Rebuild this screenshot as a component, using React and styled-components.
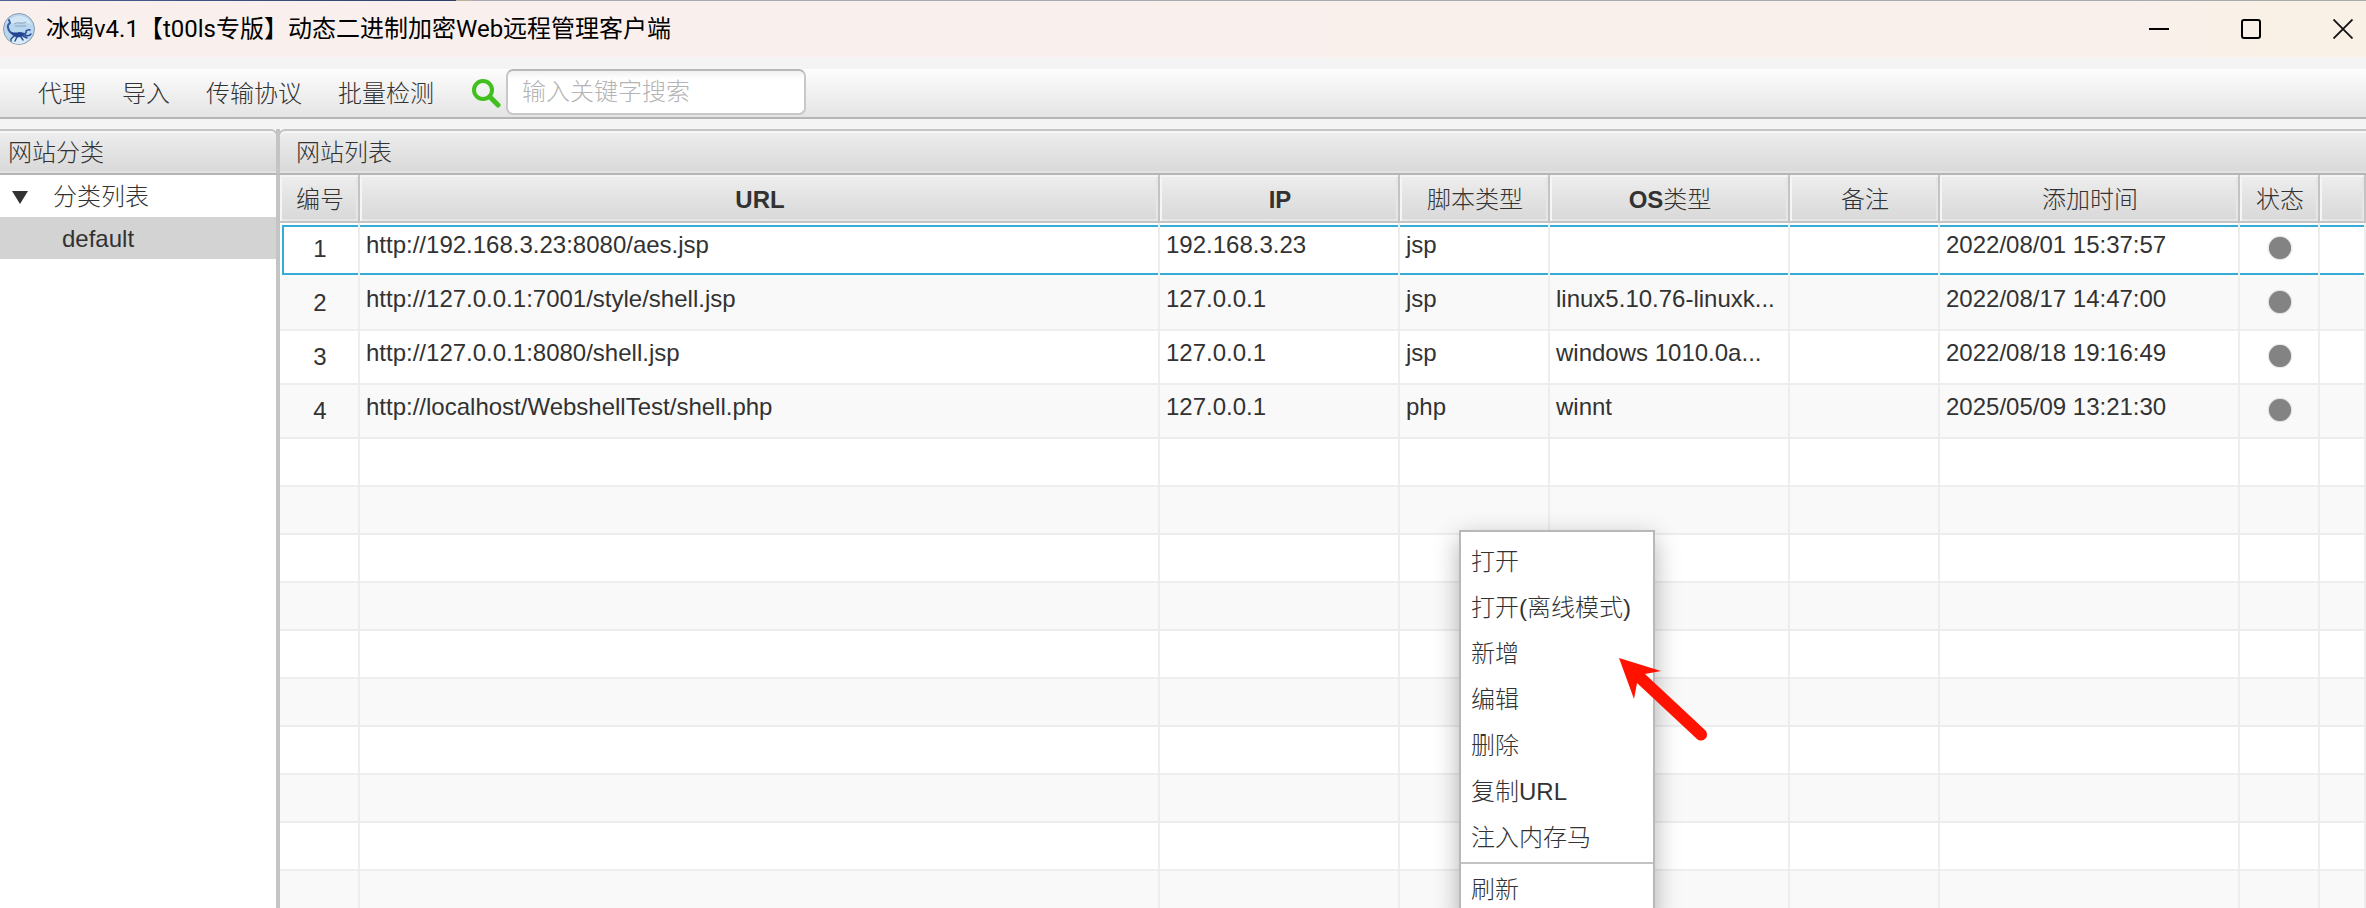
import React from "react";
import styled, { createGlobalStyle, css } from "styled-components";

const GlobalStyle = createGlobalStyle`
  *, *::before, *::after { box-sizing: border-box; }
  body {
    margin: 0;
    background: #f4f4f4;
    color: #323232;
    font: 24px/28px "Liberation Sans", "Noto Sans CJK SC", sans-serif;
    font-weight: 300;
  }
  button, input { font: inherit; color: inherit; }
`;

const LINE = "#c4c4c4";
const CELL_LINE = "#ededed";
const FOCUS = "#35abd6";

const Window = styled.div`
  display: flex;
  flex-direction: column;
  height: 100vh;
  overflow: hidden;
`;

const TopEdge = styled.div`
  flex: none;
  height: 1px;
  background: linear-gradient(90deg, #4c6394 0, #2e3f6b 456px, #b9b39c 456px, #b9b39c 472px, #aaa9ae 472px);
`;

const TitleBar = styled.header`
  flex: none;
  display: flex;
  align-items: center;
  height: 56px;
  padding-left: 3px;
  background: linear-gradient(90deg, #f9f0ee 0, #f9f0ec 90%, #f9f1e6 96%);
`;

const Title = styled.h1`
  flex: 1;
  margin: 0 0 0 11px;
  font: 400 24px/32px Roboto, "Noto Sans CJK SC", sans-serif;
  color: #000;
  white-space: nowrap;
`;

const WindowButtons = styled.div`
  display: flex;
  gap: 46px;
`;

const WindowButton = styled.button`
  display: grid;
  place-items: center;
  width: 46px;
  height: 46px;
  padding: 0;
  border: 0;
  background: none;
`;

const Toolbar = styled.div`
  flex: none;
  display: flex;
  align-items: center;
  height: 50px;
  margin: 12px 0 10px;
  padding-left: 20px;
  border-bottom: 2px solid #b5b5b5;
  background: linear-gradient(#fdfdfd, #e4e4e4);
`;

const MenuButton = styled.button`
  padding: 2px 18px 0;
  border: 0;
  background: none;
  white-space: nowrap;
`;

const SearchLabel = styled.label`
  display: flex;
  align-items: center;
  gap: 5px;
  margin-left: 20px;
`;

const SearchInput = styled.input`
  width: 300px;
  height: 46px;
  margin-bottom: 2px;
  padding: 0 14px;
  border: 2px solid #c8c8c8;
  border-top-color: #b8b8b8;
  border-radius: 7px;
  background: linear-gradient(#f0f0f0, #fff 8px);
  outline: 0;
  &::placeholder { color: #b4b4b4; opacity: 1; }
`;

const Main = styled.main`
  flex: 1;
  min-height: 0;
  display: flex;
`;

const Pane = styled.section`
  display: flex;
  flex-direction: column;
  background: #fff;
`;

const SidePane = styled(Pane)`
  flex: none;
  width: 278px;
  border-right: 2px solid ${LINE};
`;

const ListPane = styled(Pane)`
  position: relative;
  flex: 1;
  min-width: 0;
  border-left: 2px solid ${LINE};
`;

const headerFace = css`
  background: linear-gradient(#eeeeee, #d8d8d8);
`;

const PaneTitle = styled.h2`
  flex: none;
  height: 46px;
  margin: 0;
  margin-${(p) => p.$joined}: -2px;
  padding: 0 0 0 ${(p) => p.$indent}px;
  border: 2px solid ${LINE};
  border-bottom-color: #b5b5b5;
  border-${(p) => (p.$joined === "left" ? "right" : "left")}: 0;
  border-top-${(p) => p.$joined}-radius: 7px;
  ${headerFace}
  box-shadow: inset 0 2px #f6f6f6, inset 0 -2px #e2e2e2;
  font-size: 24px;
  font-weight: 300;
  line-height: 44px;
`;

const Tree = styled.ul`
  margin: 0;
  padding: 0;
  list-style: none;
`;

const TreeItem = styled.li`
  display: flex;
  align-items: center;
  height: 42px;
  padding: 2px 0 0 ${(p) => (p.$leaf ? 62 : 12)}px;
  gap: 25px;
  background: ${(p) => (p.$selected ? "#d3d3d3" : "#fff")};
`;

const Table = styled.table`
  width: 100%;
  table-layout: fixed;
  border-collapse: separate;
  border-spacing: 0;
`;

const Column = styled.col`
  width: ${(p) => (p.$width ? `${p.$width}px` : "auto")};
`;

const HeadCell = styled.th`
  height: 48px;
  padding: 4px 0 0 2px;
  border-right: 2px solid ${LINE};
  border-bottom: 2px solid ${LINE};
  ${headerFace}
  box-shadow: inset 2px 2px #f5f5f5, inset -2px -2px #e6e6e6;
  font-weight: 300;
  white-space: nowrap;
`;

const HeadLatin = styled.span`
  font-weight: 700;
`;

const Cell = styled.td`
  height: ${(p) => (p.$empty ? 48 : 54)}px;
  padding: ${(p) => (p.$center ? "0 0 0 2px" : "8px 6px 0")};
  border-right: 2px solid ${CELL_LINE};
  border-bottom: 2px solid ${CELL_LINE};
  text-align: ${(p) => (p.$center ? "center" : "left")};
  vertical-align: ${(p) => (p.$center ? "middle" : "top")};
  white-space: nowrap;
  overflow: hidden;
`;

const Row = styled.tr`
  background: #fff;
  &:nth-child(even) { background: #f9f9f9; }
  ${(p) =>
    p.$selected &&
    css`
      ${Cell} {
        border-bottom-color: #fafafa;
        box-shadow: inset 0 2px #fff, inset 0 4px ${FOCUS}, inset 0 -2px ${FOCUS};
      }
      ${Cell}:first-child {
        box-shadow: inset 0 2px #fff, inset 2px 0 #fff, inset 4px 0 ${FOCUS}, inset 0 4px ${FOCUS},
          inset 0 -2px ${FOCUS};
      }
    `}
`;

const StatusDot = styled.span`
  display: block;
  width: 22px;
  height: 22px;
  margin: 0 auto 2px;
  border-radius: 50%;
  background: #838383;
  box-shadow: 0 0 2px #999;
`;

const ContextMenu = styled.div`
  position: absolute;
  left: 1179px;
  top: 401px;
  width: 196px;
  padding: 6px 0;
  border: 2px solid #b8b8b8;
  background: #fff;
  box-shadow: 0 8px 24px rgba(0, 0, 0, 0.3);
`;

const ContextItem = styled.button`
  display: block;
  width: 100%;
  height: 46px;
  padding: 2px 0 0 10px;
  border: 0;
  background: none;
  text-align: left;
  white-space: nowrap;
`;

const Separator = styled.hr`
  height: 2px;
  margin: 2px 0;
  border: 0;
  background: ${LINE};
`;

const Arrow = styled.svg`
  position: absolute;
  left: 1338px;
  top: 528px;
`;

const Logo = () => (
  <svg width="32" height="32" viewBox="0 0 32 32" aria-hidden="true">
    <circle cx="16" cy="16" r="15.5" fill="#b9d6ef" stroke="#8d9cab" />
    <path d="M4 9Q10 2 18 3T29 12Q22 8 16 10T4 9Z" fill="#d3e6f6" />
    <path d="M6 27Q14 23 26 26Q22 31 15 31Q9 30 6 27Z" fill="#d9eaf8" />
    <path d="M11 11q4-2 6-1t6-1M12 13h11" stroke="#8fa5be" fill="none" />
    <path
      d="M6 7l1 3Q4 12 5 15Q6 19 10 21"
      stroke="#3a5ba6"
      strokeWidth="2"
      fill="none"
      strokeLinecap="round"
      strokeLinejoin="round"
    />
    <path d="M8 19Q13 20 16 19Q21 19 22 21Q19 25 13 24Q9 23 8 19Z" fill="#24448f" />
    <path
      d="M21 21q3-1 2-3q2-2 4-1M22 22q4 2 6-1M11 23l-3 3v2M14 24l-2 4M18 24l2 3M20 23l4 2"
      stroke="#2c4c97"
      strokeWidth="1.5"
      fill="none"
      strokeLinecap="round"
    />
  </svg>
);

const SearchIcon = () => (
  <svg width="29" height="30" viewBox="0 0 29 30" aria-hidden="true">
    <circle cx="11" cy="12" r="9" fill="none" stroke="#3fc01c" strokeWidth="4" />
    <path d="M18 19l8 8" stroke="#3fc01c" strokeWidth="5" strokeLinecap="round" />
  </svg>
);

const columns = [
  { title: "编号", width: 80 },
  { latin: "URL", width: 800 },
  { latin: "IP", width: 240 },
  { title: "脚本类型", width: 150 },
  { latin: "OS", title: "类型", width: 240 },
  { title: "备注", width: 150 },
  { title: "添加时间", width: 300 },
  { title: "状态", width: 80 },
  {},
];

const sites = [
  ["http://192.168.3.23:8080/aes.jsp", "192.168.3.23", "jsp", "", "", "2022/08/01 15:37:57"],
  ["http://127.0.0.1:7001/style/shell.jsp", "127.0.0.1", "jsp", "linux5.10.76-linuxk...", "", "2022/08/17 14:47:00"],
  ["http://127.0.0.1:8080/shell.jsp", "127.0.0.1", "jsp", "windows 1010.0a...", "", "2022/08/18 19:16:49"],
  ["http://localhost/WebshellTest/shell.php", "127.0.0.1", "php", "winnt", "", "2025/05/09 13:21:30"],
];

const EMPTY_ROWS = 10;
const menus = ["代理", "导入", "传输协议", "批量检测"];
const actions = ["打开", "打开(离线模式)", "新增", "编辑", "删除", "复制URL", "注入内存马"];

export default function App() {
  return (
    <Window>
      <GlobalStyle />
      <TopEdge />
      <TitleBar>
        <Logo />
        <Title>冰蝎v4.1【t00ls专版】动态二进制加密Web远程管理客户端</Title>
        <WindowButtons>
          <WindowButton aria-label="最小化">
            <svg width="20" height="20">
              <path d="M0 10h20" stroke="#000" strokeWidth="2" />
            </svg>
          </WindowButton>
          <WindowButton aria-label="最大化">
            <svg width="20" height="20">
              <rect x="1" y="1" width="18" height="18" rx="2" fill="none" stroke="#000" strokeWidth="2" />
            </svg>
          </WindowButton>
          <WindowButton aria-label="关闭">
            <svg width="20" height="20">
              <path d="M0.5 0.5l19 19M19.5 0.5l-19 19" stroke="#111" strokeWidth="1.8" />
            </svg>
          </WindowButton>
        </WindowButtons>
      </TitleBar>

      <Toolbar>
        {menus.map((name) => (
          <MenuButton key={name}>{name}</MenuButton>
        ))}
        <SearchLabel>
          <SearchIcon />
          <SearchInput type="text" placeholder="输入关键字搜索" aria-label="搜索" />
        </SearchLabel>
      </Toolbar>

      <Main>
        <SidePane>
          <PaneTitle $joined="right" $indent={8}>网站分类</PaneTitle>
          <Tree>
            <TreeItem>
              <svg width="16" height="13" aria-hidden="true">
                <path d="M0 0h16L8 13z" fill="#323232" />
              </svg>
              分类列表
            </TreeItem>
            <TreeItem $leaf $selected>default</TreeItem>
          </Tree>
        </SidePane>

        <ListPane>
          <PaneTitle $joined="left" $indent={16}>网站列表</PaneTitle>
          <Table>
            <colgroup>
              {columns.map((c, i) => (
                <Column key={i} $width={c.width} />
              ))}
            </colgroup>
            <thead>
              <tr>
                {columns.map((c, i) => (
                  <HeadCell key={i} scope="col">
                    {c.latin && <HeadLatin>{c.latin}</HeadLatin>}
                    {c.title}
                  </HeadCell>
                ))}
              </tr>
            </thead>
            <tbody>
              {sites.map((site, i) => (
                <Row key={site[0]} $selected={i === 0}>
                  <Cell $center>{i + 1}</Cell>
                  {site.map((value, j) => (
                    <Cell key={j}>{value}</Cell>
                  ))}
                  <Cell $center>
                    <StatusDot />
                  </Cell>
                  <Cell />
                </Row>
              ))}
              {Array.from({ length: EMPTY_ROWS }, (_, i) => (
                <Row key={i}>
                  {columns.map((_, j) => (
                    <Cell key={j} $empty />
                  ))}
                </Row>
              ))}
            </tbody>
          </Table>

          <ContextMenu>
            {actions.map((name) => (
              <ContextItem key={name}>{name}</ContextItem>
            ))}
            <Separator />
            <ContextItem>刷新</ContextItem>
          </ContextMenu>
          <Arrow width="92" height="88" viewBox="0 0 92 88" aria-hidden="true">
            <path
              d="M1 1L43 14L27 17L87 73A6 6 0 0 1 79 82L19 26L16 42Z"
              fill="#ff1200"
            />
          </Arrow>
        </ListPane>
      </Main>
    </Window>
  );
}
